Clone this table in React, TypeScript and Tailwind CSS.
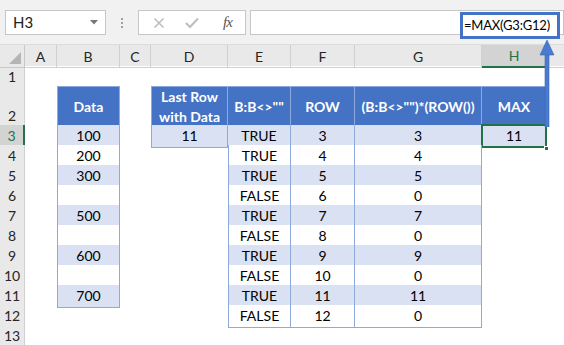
import React from 'react';

type Kind = 'h' | 'd' | 'n';
type Cell = { t?: string; k: Kind; sel?: boolean };

const cols = ['A', 'B', 'C', 'D', 'E', 'F', 'G', 'H'];

const colB: Record<number, string> = { 3: '100', 4: '200', 5: '300', 6: '', 7: '500', 8: '', 9: '600', 10: '', 11: '700' };
const colE = ['TRUE', 'TRUE', 'TRUE', 'FALSE', 'TRUE', 'FALSE', 'TRUE', 'FALSE', 'TRUE', 'FALSE'];
const colG = ['3', '4', '5', '0', '7', '0', '9', '0', '11', '0'];

// build the sheet rows (cols A..H + filler)
function rowCells(r: number): Cell[] {
  const none: Cell = { k: 'n' };
  if (r === 2) {
    return [
      none,
      { t: 'Data', k: 'h' },
      none,
      { t: 'Last Row\nwith Data', k: 'h' },
      { t: 'B:B<>""', k: 'h' },
      { t: 'ROW', k: 'h' },
      { t: '(B:B<>"")*(ROW())', k: 'h' },
      { t: 'MAX', k: 'h' },
      none,
    ];
  }
  if (r >= 3 && r <= 12) {
    const i = r - 3;
    return [
      none,
      r <= 11 ? { t: colB[r], k: 'd' } : none,
      none,
      r === 3 ? { t: '11', k: 'd' } : none,
      { t: colE[i], k: 'd' },
      { t: String(r), k: 'd' },
      { t: colG[i], k: 'd' },
      r === 3 ? { t: '11', k: 'd', sel: true } : none,
      none,
    ];
  }
  return Array.from({ length: 9 }, () => none);
}

const rows = Array.from({ length: 13 }, (_, i) => i + 1);

function SheetCell({ c, r, left }: { c: Cell; r: number; left: Cell | null }) {
  if (c.k === 'n') return <div />;
  const light = c.k === 'd' && r % 2 === 1;
  const needL = !left || left.k === 'n';
  return (
    <div
      className={[
        'relative flex items-center justify-center text-center border-[#8ea9db] border-r border-b',
        r === 2 ? 'border-t' : '',
        needL ? 'border-l' : '',
        c.k === 'h'
          ? 'bg-[#4472c4] text-white font-bold whitespace-pre-line leading-[20px]'
          : light
            ? 'bg-[#d9e1f2] text-black leading-[18px]'
            : 'bg-white text-black leading-[18px]',
      ].join(' ')}
    >
      {c.t}
      {c.sel && (
        <>
          <div className="absolute -left-px -top-px -right-px -bottom-px border-2 border-[#217346]" />
          <div className="absolute -right-[3px] -bottom-[4px] w-[5px] h-[5px] bg-[#217346] border border-white" />
        </>
      )}
    </div>
  );
}

export default function App() {
  return (
    <div className="relative w-[564px] h-[345px] overflow-hidden bg-white font-['Lato','Liberation_Sans',sans-serif] text-[14px] text-black">
      {/* formula toolbar */}
      <div className="h-[45px] bg-[#f1f1f1] border-b border-[#dcdcdc] flex items-start pt-[10px] pl-[5px]">
        <div className="w-[101px] h-[25px] bg-white border border-[#c6c6c6] flex items-center justify-between pl-[7px] pr-[7px]">
          <span className="text-[15px] text-[#222]">H3</span>
          <svg width="8" height="5" viewBox="0 0 8 5">
            <path d="M0 0 L8 0 L4 4.5 Z" fill="#777" />
          </svg>
        </div>
        <div className="w-[32px] h-[25px] flex flex-col items-center justify-center gap-[2px]">
          <div className="w-[2px] h-[2px] bg-[#a0a0a0]" />
          <div className="w-[2px] h-[2px] bg-[#a0a0a0]" />
          <div className="w-[2px] h-[2px] bg-[#a0a0a0]" />
        </div>
        <div className="w-[108px] h-[25px] bg-white border border-[#c6c6c6] flex items-center">
          <svg className="ml-[14px]" width="12" height="12" viewBox="0 0 12 12">
            <path d="M1.5 1.5 L10.5 10.5 M10.5 1.5 L1.5 10.5" stroke="#bdbdbd" strokeWidth="1.6" />
          </svg>
          <svg className="ml-[20px]" width="14" height="12" viewBox="0 0 14 12">
            <path d="M1 6 L5 10 L13 1.5" stroke="#bdbdbd" strokeWidth="2" fill="none" />
          </svg>
          <span className="ml-[24px] font-['Liberation_Serif',serif] italic text-[15px] text-[#555] tracking-[-1px]">fx</span>
        </div>
        <div className="flex-1 ml-[4px] h-[25px] bg-white border border-[#c6c6c6]" />
      </div>

      {/* column headers */}
      <div className="grid grid-cols-[25px_32px_63px_31px_77px_63px_64px_127px_65px_17px] h-[21px] bg-[#e9e9e9]">
        <div className="relative border-r border-b border-[#c8c8c8]">
          <svg className="absolute right-[3px] bottom-[3px]" width="12" height="12" viewBox="0 0 12 12">
            <path d="M12 0 L12 12 L0 12 Z" fill="#b5b5b5" />
          </svg>
        </div>
        {cols.map((c) => (
          <div
            key={c}
            className={
              c === 'H'
                ? 'flex items-center justify-center bg-[#d3d3d3] text-[#217346] border-r border-[#c8c8c8] border-b-2 border-b-[#217346]'
                : 'flex items-center justify-center text-[#262626] border-r border-b border-[#d0d0d0]'
            }
          >
            {c}
          </div>
        ))}
        <div className="border-b border-[#d0d0d0]" />
      </div>

      {/* sheet rows */}
      {rows.map((r) => {
        const cells = rowCells(r);
        return (
          <div
            key={r}
            className={[
              'grid grid-cols-[25px_32px_63px_31px_77px_63px_64px_127px_65px_17px]',
              r === 2 ? 'h-[39px]' : 'h-[20px]',
            ].join(' ')}
          >
            <div
              className={
                r === 3
                  ? 'flex items-end justify-center pb-[1px] bg-[#d3d3d3] text-[#217346] border-b border-[#c8c8c8] border-r-2 border-r-[#217346]'
                  : 'flex items-end justify-center pb-[1px] bg-[#e9e9e9] text-[#262626] border-b border-r border-[#d0d0d0]'
              }
            >
              {r}
            </div>
            {cells.map((c, i) => (
              <SheetCell key={i} c={c} r={r} left={i > 0 ? cells[i - 1] : null} />
            ))}
          </div>
        );
      })}

      {/* highlighted formula */}
      <div className="absolute left-[460px] top-[12px] w-[100px] h-[27px] bg-white border-[3px] border-[#4472c4] flex items-center pl-[1px] text-[13px] tracking-[-0.2px] whitespace-nowrap text-black">
        =MAX(G3:G12)
      </div>

      {/* arrow */}
      <svg className="absolute left-[538px] top-[39px]" width="18" height="88" viewBox="0 0 18 88">
        <rect x="7" y="14" width="4" height="74" fill="#4a7bd0" stroke="#3c66b4" strokeWidth="0.6" />
        <path d="M9 1 L16 16 L2 16 Z" fill="#4a7bd0" stroke="#3c66b4" strokeWidth="0.6" />
      </svg>
    </div>
  );
}
